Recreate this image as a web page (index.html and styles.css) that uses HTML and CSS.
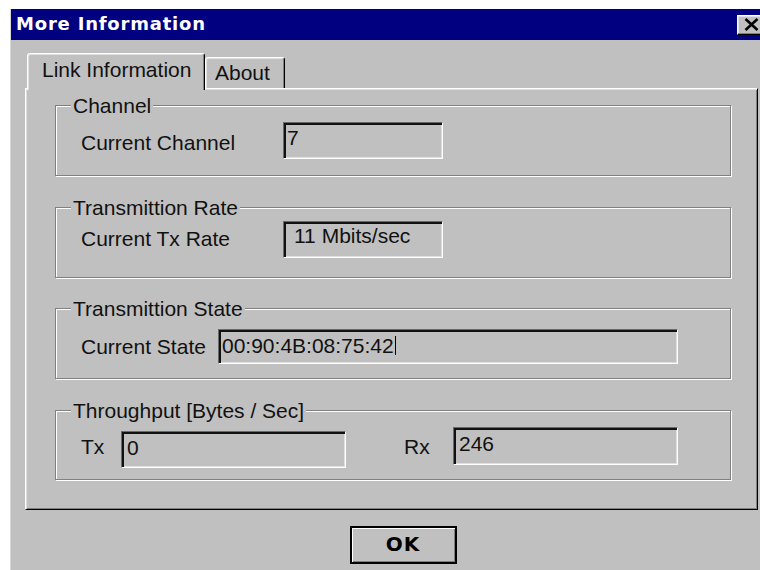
FILE: index.html
```html
<!DOCTYPE html>
<html lang="en">
<head>
<meta charset="utf-8">
<title>More Information</title>
<link rel="stylesheet" href="styles.css">
</head>
<body>
<div class="window">
  <div class="titlebar">
    <span class="title">More Information</span>
    <button class="close" type="button" aria-label="Close">
      <svg width="15" height="13" viewBox="0 0 15 13"><path d="M1.5 1 L13.5 12 M13.5 1 L1.5 12" stroke="#000" stroke-width="2.6" fill="none"/></svg>
    </button>
  </div>
  <div class="body">
    <div class="tabs">
      <div class="tab tab-active">Link Information</div>
      <div class="tab tab-about">About</div>
    </div>
    <div class="panel">
      <div class="group">
        <div class="legend">Channel</div>
        <div class="row row-channel">
          <span class="lbl lbl-wide lbl-channel">Current Channel</span>
          <div class="field field-short field-channel">7</div>
        </div>
      </div>
      <div class="group">
        <div class="legend">Transmittion Rate</div>
        <div class="row row-rate">
          <span class="lbl lbl-wide">Current Tx Rate</span>
          <div class="field field-short field-rate">11 Mbits/sec</div>
        </div>
      </div>
      <div class="group group-state">
        <div class="legend">Transmittion State</div>
        <div class="row row-state">
          <span class="lbl lbl-state">Current State</span>
          <div class="field field-state">00:90:4B:08:75:42<span class="caret"></span></div>
        </div>
      </div>
      <div class="group group-thru">
        <div class="legend">Throughput [Bytes / Sec]</div>
        <div class="row row-thru">
          <span class="lbl lbl-tx">Tx</span>
          <div class="field field-tx">0</div>
          <span class="lbl lbl-rx">Rx</span>
          <div class="field field-rx">246</div>
        </div>
      </div>
    </div>
    <div class="footer">
      <button class="ok" type="button">OK</button>
    </div>
  </div>
</div>
</body>
</html>
```
FILE: styles.css
```css
* { box-sizing: border-box; }

html, body {
  margin: 0;
  height: 100%;
}

body {
  background: #fff;
  overflow: hidden;
  font-family: "Liberation Sans", Arial, sans-serif;
  font-size: 21px;
  color: #111;
}

/* dialog frame */
.window {
  margin: 9px 0 0 10px;
  border-left: 1px solid #d8d8d8;
  background: #c0c0c0;
  height: 561px;
}

.titlebar {
  height: 31px;
  background: #000080;
  display: flex;
  align-items: center;
  padding-left: 5px;
}

.title {
  flex: 1;
  font-family: "DejaVu Sans", sans-serif;
  font-weight: bold;
  font-size: 18px;
  letter-spacing: 0.8px;
  line-height: 24px;
  padding-bottom: 2px;
  color: #fff;
  white-space: nowrap;
}

.close {
  flex: none;
  width: 28px;
  height: 20px;
  margin-right: -5px;
  padding: 0;
  background: #c0c0c0;
  border: 1px solid;
  border-color: #fff #000 #000 #fff;
  box-shadow: inset -1px -1px #808080, inset 1px 1px #dfdfdf;
  display: flex;
  align-items: center;
  justify-content: center;
}

.body {
  padding: 13px 2px 0 14px;
}

/* tab strip */
.tabs {
  display: flex;
  align-items: flex-end;
  position: relative;
  z-index: 1;
  margin-bottom: -2px;
}

.tab {
  background: #c0c0c0;
  border: 1px solid;
  border-bottom: none;
  border-color: #fff #000 transparent #fff;
  border-radius: 3px 3px 0 0;
  box-shadow: inset 1px 1px #dfdfdf, inset -1px 0 #808080;
  line-height: 24px;
  white-space: nowrap;
}

.tab-active {
  margin-left: 2px;
  width: 178px;
  height: 37px;
  padding: 4px 0 0 14px;
}

.tab-about {
  width: 80px;
  height: 31px;
  margin-bottom: 2px;
  padding: 3px 0 0 9px;
}

.panel {
  border: 1px solid;
  border-color: #fff #000 #000 #fff;
  box-shadow: inset 1px 1px #dfdfdf, inset -1px -1px #808080;
  padding: 16px 26px 29px 29px;
  display: flex;
  flex-direction: column;
  gap: 31px;
}

/* etched group boxes */
.group {
  height: 71px;
  border: 1px solid #808080;
  box-shadow: inset 1px 1px #fff, 1px 1px #fff;
}

.group-state { margin-top: -1px; }
.group-thru { height: 70px; }

.legend {
  width: max-content;
  margin: -12px 0 0 15px;
  padding: 0 2px;
  background: #c0c0c0;
  line-height: 24px;
  white-space: nowrap;
}

.row {
  display: flex;
  align-items: flex-start;
  padding-left: 25px;
}

.row-channel { margin-top: 4px; }
.row-rate { margin-top: 1px; }
.row-state { margin-top: 8px; }
.row-thru { margin-top: 4px; }

.lbl {
  flex: none;
  line-height: 24px;
  white-space: nowrap;
  padding-top: 6px;
}

.lbl-wide { width: 202px; }
.lbl-channel { padding-top: 9px; }
.lbl-state { width: 137px; }
.lbl-tx { width: 40px; padding-top: 8px; }
.lbl-rx { width: 49px; margin-left: 58px; padding-top: 8px; }

/* sunken read-only fields */
.field {
  flex: none;
  height: 37px;
  border: 1px solid;
  border-color: #6a6a6a #fff #fff #6a6a6a;
  box-shadow: inset 2px 2px #111, inset -1px -1px #dfdfdf;
  padding: 4px 0 0 3px;
  line-height: 24px;
  white-space: nowrap;
  display: flex;
  align-items: flex-start;
}

.field-short { width: 160px; }
.field-channel { padding-top: 3px; }
.field-rate { padding-top: 2px; padding-left: 10px; }
.field-state { width: 460px; height: 35px; }
.field-tx { width: 225px; margin-top: 4px; padding-left: 5px; }
.field-rx { width: 225px; height: 38px; padding-left: 5px; }

.caret {
  width: 1px;
  height: 19px;
  margin: 2px 0 0 1px;
  background: #000;
}

.footer {
  display: flex;
  justify-content: center;
  padding: 16px 0 0 23px;
}

.ok {
  width: 107px;
  height: 38px;
  border: 2px solid #000;
  background: #c0c0c0;
  box-shadow: inset 1px 1px #fff, inset -1px -1px #808080;
  font-family: "DejaVu Sans", sans-serif;
  font-weight: bold;
  font-size: 20px;
  letter-spacing: 1px;
  line-height: 24px;
  color: #000;
  padding: 0 0 3px;
}
```
